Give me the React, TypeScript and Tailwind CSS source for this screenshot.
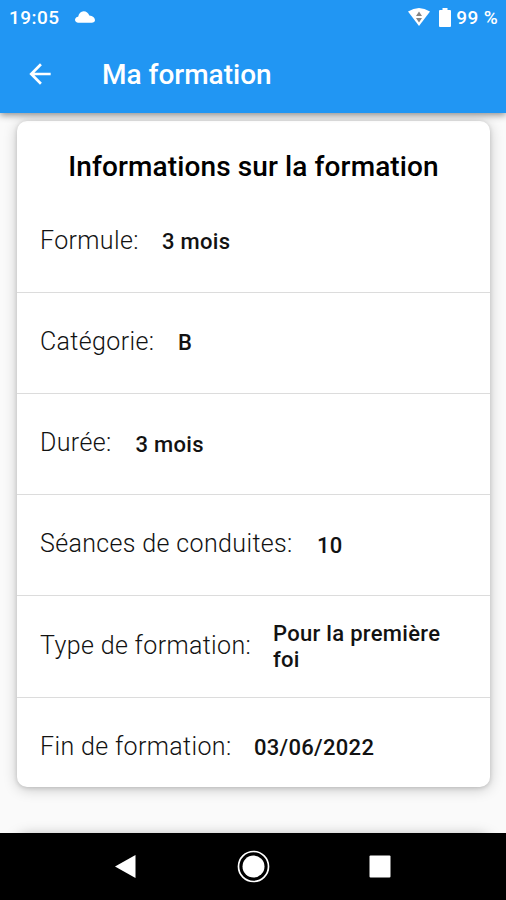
const rows = [
  { label: "Formule:", value: "3 mois", lw: "w-[98px]", vw: "w-[72px]" },
  { label: "Catégorie:", value: "B", lw: "w-[114px]", vw: "w-[18px]" },
  { label: "Durée:", value: "3 mois", lw: "w-[71.5px]", vw: "w-[72px]" },
  { label: "Séances de conduites:", value: "10", lw: "w-[253px]", vw: "w-[30px]" },
  { label: "Type de formation:", value: "Pour la première foi", lw: "w-[209px]", vw: "w-[180px]" },
  { label: "Fin de formation:", value: "03/06/2022", lw: "w-[190px]", vw: "w-[130px]" },
];

export default function App() {
  return (
    <div className="flex h-[900px] w-[506px] flex-col overflow-hidden bg-[#fafafa] font-['Roboto',sans-serif] text-[#121212]">
      <header className="z-10 h-[113px] shrink-0 bg-[#2196f3] text-white shadow-[0_2px_7px_rgba(0,0,0,0.45)]">
        <div className="flex h-[36px] items-center pl-[9px] pr-[8px] text-[19px] font-medium">
          <span className="w-[51px] pt-px tracking-[0.45px]">19:05</span>
          <svg className="ml-[15px] -mt-[2px]" width="20" height="12" viewBox="0 0 21 12" fill="currentColor">
            <path d="M3.500 12C1.500 12 0 10.700 0 9C0 7.200 1.500 6 3.300 5.700C4 2.200 6.200 0 9 0C12 0 14 1.700 15 4.500C18.500 4.800 21 7 21 9.500C21 11 19.500 12 17.500 12Z" />
          </svg>
          <svg className="ml-auto -mt-[2px]" width="22" height="18" viewBox="0 0 22 18">
            <path d="M0 3.500Q11-3.500 22 3.500L11 18Z" fill="currentColor" />
            <path d="M8 8L11 3.500L14 8ZM8 10H14L11 14.500Z" fill="#858585" />
          </svg>
          <svg className="ml-[9px] -mt-[1px]" width="12" height="19" viewBox="0 0 12 19" fill="currentColor">
            <path d="M3.500 0h5v2H11a1 1 0 0 1 1 1v15a1 1 0 0 1-1 1H1a1 1 0 0 1-1-1V3a1 1 0 0 1 1-1h2.500z" />
          </svg>
          <span className="ml-[5px] pt-px tracking-[0.35px]">99 %</span>
        </div>
        <div className="flex h-[77px] items-center pl-[24px]">
          <svg className="-mt-[2px]" width="32" height="32" viewBox="0 0 24 24" fill="currentColor">
            <path d="M20 11H7.83l5.59-5.59L12 4l-8 8 8 8 1.41-1.41L7.83 13H20z" />
          </svg>
          <h1 className="ml-[46px] pt-px text-[28px] font-medium">Ma formation</h1>
        </div>
      </header>
      <main className="flex min-h-0 flex-1 flex-col gap-[47px] overflow-hidden pl-[17px] pr-[16px] pt-2">
        <section className="h-[666px] shrink-0 rounded-[10px] bg-white shadow-[0_2px_14px_rgba(0,0,0,0.22),0_1px_4px_rgba(0,0,0,0.14)]">
          <h2 className="flex h-[70px] items-center justify-center pt-[22px] text-[28px] font-medium tracking-[0.12px] text-black">Informations sur la formation</h2>
          {rows.map((r, i) => (
            <div key={r.label} className={"flex items-center pl-[23px] " + (i === 0 ? "h-[100.5px]" : "h-[101.25px] border-t border-[#dcdcdc]")}>
              <span className={"shrink-0 whitespace-nowrap pb-[2px] text-[25px] font-light tracking-[0.36px] " + r.lw}>{r.label}</span>
              <span className={"ml-[24px] pt-[2px] text-[22px] font-medium leading-[26.5px] tracking-[0.3px] " + r.vw}>{r.value}</span>
            </div>
          ))}
        </section>
        <section className="h-[100px] shrink-0 rounded-[10px] bg-white shadow-[0_2px_14px_rgba(0,0,0,0.35)]" />
      </main>
      <nav className="z-10 flex h-[67px] shrink-0 items-center bg-black text-white">
        <svg width="506" height="67" fill="currentColor">
          <path d="M115 33.500L135.500 22V45Z" />
          <circle cx="253.500" cy="33.500" r="15" fill="none" stroke="currentColor" strokeWidth="1.700" />
          <circle cx="253.500" cy="33.500" r="11" />
          <rect x="369.500" y="22.500" width="21" height="22" rx="1" />
        </svg>
      </nav>
    </div>
  );
}
